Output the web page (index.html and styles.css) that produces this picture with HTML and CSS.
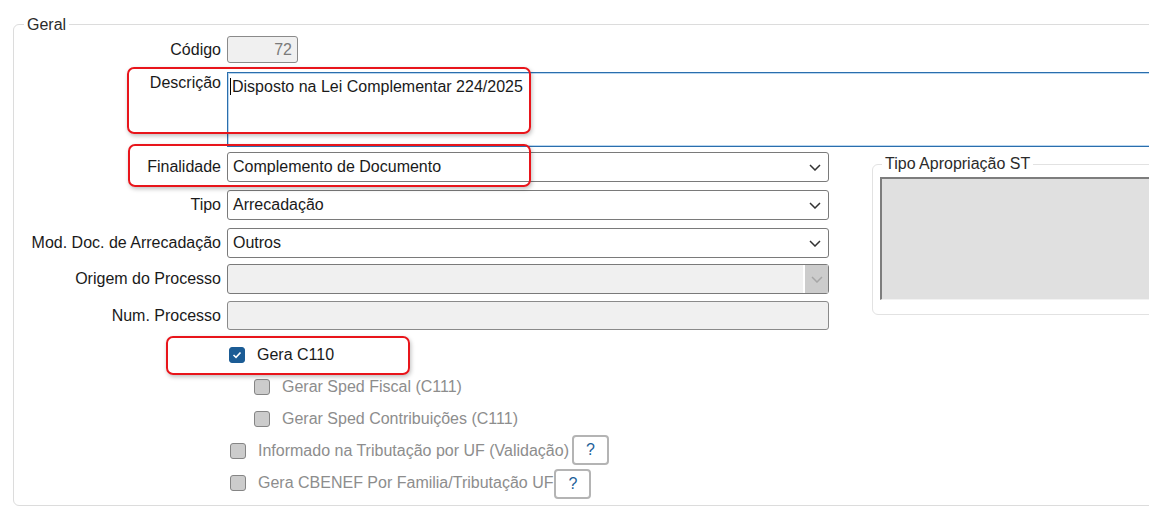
FILE: index.html
```html
<!DOCTYPE html>
<html>
<head>
    <link rel="stylesheet" href="styles.css">
</head>
<body>
    <div class="page">
        <fieldset class="geral">
            <legend class="glegend">Geral</legend>

            <div class="frow r-code">
                <div class="lbl">Código</div>
                <div class="field code">72</div>
            </div>

            <div class="frow r-desc">
                <div class="lbl top">Descrição</div>
                <div class="field memo"><span class="caret"></span>Disposto na Lei Complementar 224/2025</div>
            </div>

            <div class="main">
                <div class="lcol">
                    <div class="frow r-fin">
                        <div class="lbl">Finalidade</div>
                        <div class="field sel">Complemento de Documento
                            <svg class="chev" width="12" height="7" viewBox="0 0 12 7"><path d="M1 1 L6 6 L11 1" fill="none" stroke="#333" stroke-width="1.5"/></svg>
                        </div>
                    </div>
                    <div class="frow r-tipo">
                        <div class="lbl">Tipo</div>
                        <div class="field sel">Arrecadação
                            <svg class="chev" width="12" height="7" viewBox="0 0 12 7"><path d="M1 1 L6 6 L11 1" fill="none" stroke="#333" stroke-width="1.5"/></svg>
                        </div>
                    </div>
                    <div class="frow r-mod">
                        <div class="lbl">Mod. Doc. de Arrecadação</div>
                        <div class="field sel">Outros
                            <svg class="chev" width="12" height="7" viewBox="0 0 12 7"><path d="M1 1 L6 6 L11 1" fill="none" stroke="#333" stroke-width="1.5"/></svg>
                        </div>
                    </div>
                    <div class="frow r-orig">
                        <div class="lbl">Origem do Processo</div>
                        <div class="field sel off">
                            <span class="arrowbox">
                                <svg width="12" height="7" viewBox="0 0 12 7"><path d="M1 1 L6 6 L11 1" fill="none" stroke="#a6a6a6" stroke-width="1.5"/></svg>
                            </span>
                        </div>
                    </div>
                    <div class="frow r-num">
                        <div class="lbl">Num. Processo</div>
                        <div class="field off num"></div>
                    </div>

                    <div class="checks">
                        <div class="chk first">
                            <span class="box on">
                                <svg width="10" height="8" viewBox="0 0 10 8"><path d="M1.5 4 L4 6.3 L8.5 1.5" fill="none" stroke="#fff" stroke-width="1.6"/></svg>
                            </span>
                            <span class="ctext">Gera C110</span>
                        </div>
                        <div class="chk sub">
                            <span class="box"></span>
                            <span class="ctext dim">Gerar Sped Fiscal (C111)</span>
                        </div>
                        <div class="chk sub">
                            <span class="box"></span>
                            <span class="ctext dim">Gerar Sped Contribuições (C111)</span>
                        </div>
                        <div class="chk">
                            <span class="box"></span>
                            <span class="ctext dim">Informado na Tributação por UF (Validação)</span>
                            <span class="help">?</span>
                        </div>
                        <div class="chk">
                            <span class="box"></span>
                            <span class="ctext dim">Gera CBENEF Por Familia/Tributação UF</span>
                            <span class="help h2">?</span>
                        </div>
                    </div>
                </div>

                <fieldset class="tipost">
                    <legend class="tlegend">Tipo Apropriação ST</legend>
                    <div class="stbox"></div>
                </fieldset>
            </div>
        </fieldset>

        <!-- marcações em vermelho -->
        <div class="mark m-desc"></div>
        <div class="mark m-fin"></div>
        <div class="mark m-c110"></div>
    </div>
</body>
</html>
```

FILE: styles.css
```css
*{
    margin: 0;
    padding: 0;
    box-sizing: border-box;
}
html, body {
    overflow: hidden;
    background-color: #fff;
}
body {
    font-family: "Liberation Sans", Arial, sans-serif;
    font-size: 16px;
    color: #1a1a1a;
}

.page {
    position: relative;
    width: 1149px;
    height: 514px;
    padding: 16px 0 0 13px;
}

.geral {
    width: 1200px;
    border: 1px solid #dcdcdc;
    border-radius: 6px;
    padding: 3px 0 6px 10px;
}
.glegend {
    padding: 0 3px;
    line-height: 17px;
    color: #2b2b2b;
}

.frow {
    display: flex;
    align-items: center;
}
.frow .lbl {
    width: 197px;
    margin-right: 6px;
    text-align: right;
    white-space: nowrap;
}
.lbl.top {
    align-self: flex-start;
    padding-top: 2px;
}

.field {
    position: relative;
    height: 30px;
    border: 1px solid #7a7a7a;
    border-radius: 3px;
    background-color: #fff;
    padding-left: 5px;
    line-height: 28px;
    white-space: nowrap;
}

.r-code .field.code {
    width: 71px;
    height: 27px;
    line-height: 25px;
    background-color: #f0f0f0;
    color: #7a7a7a;
    text-align: right;
    padding-right: 5px;
    border-color: #8a8a8a;
}

.r-desc {
    margin-top: 9px;
}
.field.memo {
    width: 940px;
    height: 75px;
    border: 1px solid #2a6ead;
    border-radius: 0;
    box-shadow: inset 0 1px 0 #b9d6ef, inset 1px 0 0 #b9d6ef, inset 0 -1px 0 #b9d6ef;
    line-height: 18px;
    padding: 5px 0 0 2px;
}
.caret {
    display: inline-block;
    width: 1px;
    height: 17px;
    background-color: #000;
    vertical-align: -3px;
    margin-right: 1px;
}

.main {
    display: flex;
    align-items: flex-start;
}
.lcol {
    width: 805px;
}

.field.sel {
    width: 602px;
}
.chev {
    position: absolute;
    right: 7px;
    top: 11px;
}
.r-fin { margin-top: 5px; }
.r-tipo { margin-top: 8px; }
.r-mod { margin-top: 8px; }
.r-orig { margin-top: 6px; }
.r-num { margin-top: 7px; }

.field.off {
    background-color: #f0f0f0;
}
.field.num {
    width: 602px;
    height: 29px;
    border-color: #8a8a8a;
}
.arrowbox {
    position: absolute;
    right: 0;
    top: 0;
    width: 25px;
    height: 28px;
    background-color: #cccccc;
    border-left: 2px solid #fff;
    display: flex;
    align-items: center;
    justify-content: center;
}

.checks {
    margin-top: 9px;
}
.chk {
    display: flex;
    align-items: center;
    height: 32px;
    padding-left: 206px;
}
.chk.first {
    padding-left: 205px;
}
.chk.sub {
    padding-left: 230px;
}
.box {
    width: 16px;
    height: 16px;
    border: 1.5px solid #858585;
    border-radius: 3px;
    background-color: #cccccc;
    margin-right: 12px;
    display: flex;
    align-items: center;
    justify-content: center;
}
.box.on {
    background-color: #1b5c95;
    border-color: #1b5c95;
}
.ctext {
    white-space: nowrap;
}
.ctext.dim {
    color: #8d8d8d;
}
.help {
    width: 37px;
    height: 30px;
    margin-left: 3px;
    border: 2px solid #b4b4b4;
    border-radius: 4px;
    background-color: #fff;
    color: #1d5f9a;
    text-align: center;
    line-height: 26px;
    margin-top: -2px;
}
.help.h2 {
    margin-left: 1px;
    margin-top: 2px;
}

.tipost {
    margin-left: 43px;
    margin-top: 8px;
    width: 330px;
    border: 1px solid #e2e2e2;
    border-radius: 6px;
    padding: 4px 0 14px 7px;
}
.tlegend {
    margin-left: 2px;
    padding: 0 3px;
    line-height: 18px;
    color: #2b2b2b;
}
.stbox {
    height: 123px;
    background-color: #e0e0e0;
    border-top: 2px solid #7d7d7d;
    border-left: 2px solid #7d7d7d;
    border-bottom: 1px solid #f2f2f2;
}

.mark {
    position: absolute;
    border: 2px solid #e8151b;
    border-radius: 7px;
    box-shadow: 1px 2px 4px rgba(0,0,0,0.25);
}
.m-desc {
    left: 127px;
    top: 67px;
    width: 404px;
    height: 67px;
}
.m-fin {
    left: 128px;
    top: 144px;
    width: 403px;
    height: 43px;
}
.m-c110 {
    left: 166px;
    top: 336px;
    width: 244px;
    height: 39px;
}
```
